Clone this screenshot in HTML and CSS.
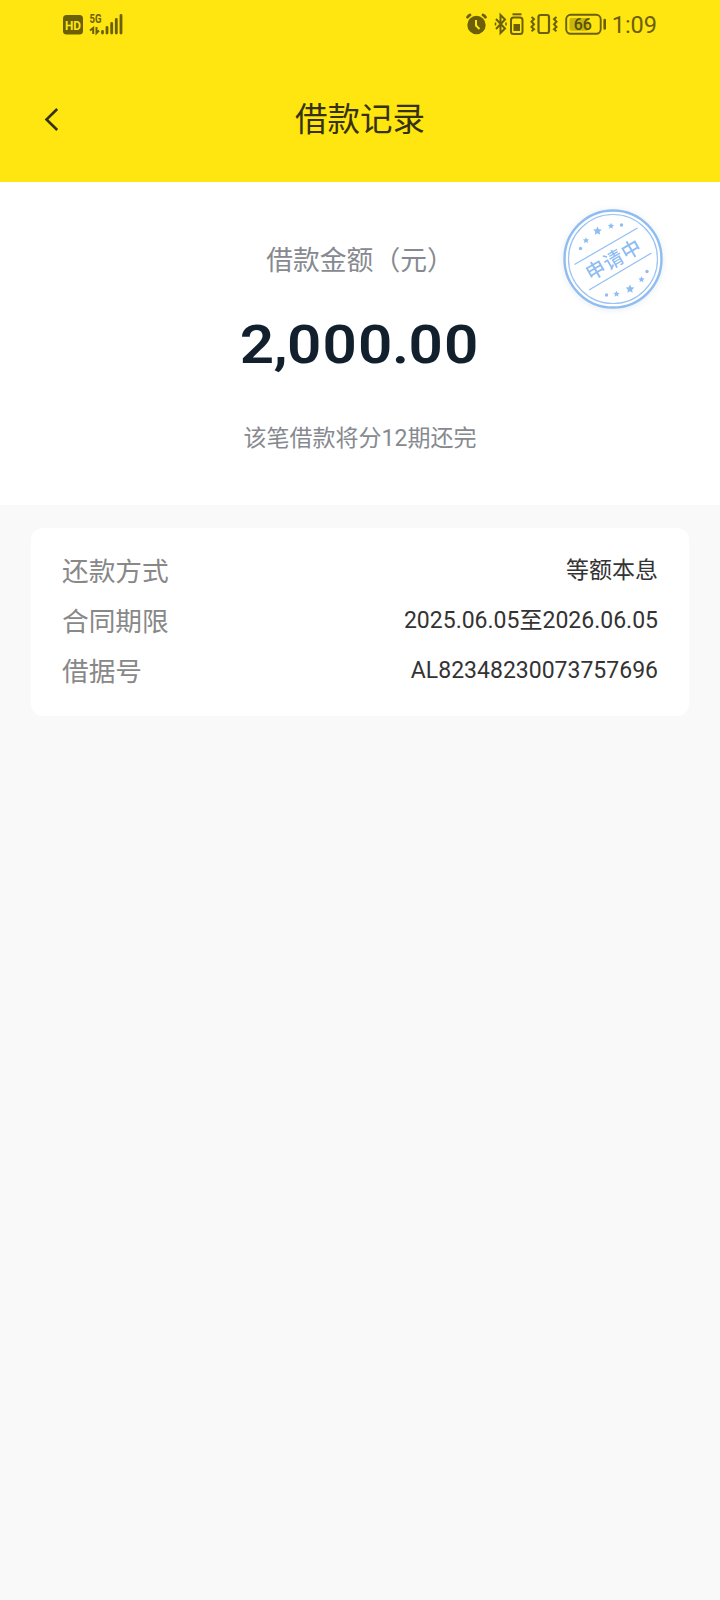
FILE: index.html
```html
<!DOCTYPE html>
<html lang="zh-CN">
<head>
    <meta charset="UTF-8">
    <meta name="viewport" content="width=device-width, initial-scale=1.0">
    <title>借款记录</title>
    <link rel="stylesheet" href="styles.css">
</head>
<body>
    <header class="header">
        <div class="status-bar">
            <svg class="status-left" width="62" height="26" viewBox="62 11 62 26">
                <rect x="63" y="15" width="20" height="19.5" rx="3.5" fill="#6b6008"/>
                <text class="hd" x="73" y="29.5" textLength="16" lengthAdjust="spacingAndGlyphs">HD</text>
                <text class="network" x="89.5" y="23" textLength="12" lengthAdjust="spacingAndGlyphs">5G</text>
                <path d="M90 30.5l3.2-2.5V34M96.5 27v6l2.5-2.5" fill="none" stroke="#6b6008" stroke-width="2"/>
                <path d="M102.5 31.5v1.5M107 27.5v5.5M111.7 23.5v9.5M116.3 19.5v13.5M121 15.5v17.5" stroke="#6b6008" stroke-width="2.8" stroke-linecap="round"/>
            </svg>
            <div class="status-right">
                <svg width="144" height="26" viewBox="465 11 144 26" fill="none" stroke="#6b6008">
                    <!-- alarm -->
                    <circle cx="476.5" cy="25" r="9.2" fill="#6b6008" stroke="none"/>
                    <path d="M467.5 17.2q1-1.5 2.5-2.2M485.5 17.2q-1-1.5-2.5-2.2" stroke-width="2.8" stroke-linecap="round"/>
                    <path d="M476 20v5.5l3.5 3.5" stroke="#ffe610" stroke-width="2"/>
                    <!-- bluetooth -->
                    <path d="M496 19l9 9.5-4.5 4.5V15l4.5 4.5-9 9.5" stroke-width="2"/>
                    <path d="M495.5 22.5v3M506 22.5v3" stroke-width="1.5"/>
                    <!-- device battery -->
                    <rect x="511" y="17.5" width="11.5" height="16.5" rx="2.5" stroke-width="2"/>
                    <path d="M512.5 14.3h9" stroke-width="2"/>
                    <rect x="513.5" y="24" width="6.5" height="7" fill="#6b6008" stroke="none"/>
                    <!-- vibrate -->
                    <rect x="538.5" y="15" width="10.5" height="18" rx="2" stroke-width="2.2"/>
                    <path d="M531.5 17l2.5 2-2.5 2.7 2.5 2.6-2.5 2.7 2.5 2.3-2.5 2M556.5 17l-2.5 2 2.5 2.7-2.5 2.6 2.5 2.7-2.5 2.3 2.5 2" stroke-width="2"/>
                    <!-- battery level -->
                    <rect x="566.2" y="14.8" width="34.5" height="19" rx="4.5" stroke-width="1.9"/>
                    <rect x="569.5" y="18" width="19" height="12.7" rx="2" fill="#c9b70d" stroke="none"/>
                    <path d="M604.7 20v8.5" stroke-width="2.6" stroke-linecap="round"/>
                    <text class="level" x="582.8" y="30">66</text>
                </svg>
                <span class="time">1:09</span>
            </div>
        </div>
        <div class="nav">
            <svg class="back" width="16" height="26" viewBox="0 0 16 26">
                <path d="M13.2 2L2.5 12.5l10.7 10.5" fill="none" stroke="#35320f" stroke-width="2.6"/>
            </svg>
            <h1>借款记录</h1>
        </div>
    </header>

    <section class="summary">
        <p class="summary-label">借款金额（元）</p>
        <p class="amount">2<span>,</span>000<span>.</span>00</p>
        <p class="summary-note">该笔借款将分12期还完</p>

        <svg class="stamp" width="116" height="116" viewBox="-58 -58 116 116">
            <defs>
                <path id="star" d="M0-4.5L1.3-1.7 4.3-1.4 2.1.7 2.7 3.7 0 2.2-2.7 3.7-2.1.7-4.3-1.4-1.3-1.7Z"/>
            </defs>
            <circle r="48.5" fill="#fff" stroke="#8fbdf2" stroke-width="2.4"/>
            <circle r="44.5" fill="none" stroke="#9bc4f3" stroke-width="1.2"/>
            <path d="M-38.5 5.5L24.5-31M-24 31L38.5-6" stroke="#94c0f3" stroke-width="1.3"/>
            <g fill="#8fbdf2">
                <circle cx="-32.5" cy="-10.5" r="1.7"/>
                <use href="#star" transform="translate(-27 -18.5) scale(.72)"/>
                <use href="#star" transform="translate(-15.5 -28)"/>
                <use href="#star" transform="translate(-2 -33) scale(.72)"/>
                <circle cx="8.5" cy="-34" r="1.7"/>
                <circle cx="-6.5" cy="36" r="1.7"/>
                <use href="#star" transform="translate(3.5 35) scale(.72)"/>
                <use href="#star" transform="translate(17 30)"/>
                <use href="#star" transform="translate(28.5 20.5) scale(.72)"/>
                <circle cx="34" cy="12.5" r="1.7"/>
            </g>
            <text class="stamp-text" transform="rotate(-30)" x="0.5" y="7.8">申请中</text>
        </svg>
    </section>

    <section class="card">
        <div class="row">
            <span class="row-label">还款方式</span>
            <span class="row-value">等额本息</span>
        </div>
        <div class="row">
            <span class="row-label">合同期限</span>
            <span class="row-value">2025.06.05至2026.06.05</span>
        </div>
        <div class="row">
            <span class="row-label">借据号</span>
            <span class="row-value">AL82348230073757696</span>
        </div>
    </section>
</body>
</html>
```
FILE: styles.css
```css
* {
    box-sizing: border-box;
}
body {
    margin: 0;
    min-height: 1600px;
    background-color: #f9f9f9;
    font-family: Roboto, "Noto Sans CJK SC", sans-serif;
    font-weight: 400;
}
h1, p {
    margin: 0;
}
.header {
    height: 182px;
    background-color: #ffe610;
}
.status-bar {
    display: flex;
    justify-content: space-between;
    align-items: center;
    height: 48px;
    padding: 0 63px 0 62px;
}
.status-right {
    display: flex;
    align-items: center;
    gap: 3px;
}
.time {
    padding-top: 2px;
    font-size: 23.5px;
    line-height: 26px;
    color: #6b6008;
}
.hd {
    font: 700 13px Roboto, sans-serif;
    fill: #ffe610;
    text-anchor: middle;
}
.network {
    font: 700 12px Roboto, sans-serif;
    fill: #6b6008;
}
.level {
    font: 500 16px Roboto, sans-serif;
    fill: #574e08;
    stroke: none;
    text-anchor: middle;
}
.nav {
    display: grid;
    grid-template-columns: 60px 1fr 60px;
    align-items: center;
    height: 144px;
}
.back {
    justify-self: end;
}
.nav h1 {
    font-size: 32.5px;
    font-weight: 400;
    line-height: 48px;
    text-align: center;
    color: #35320f;
}
.summary {
    position: relative;
    height: 323px;
    padding-top: 59px;
    background-color: #fff;
    text-align: center;
}
.summary-label {
    font-size: 26.8px;
    line-height: 40px;
    color: #868a90;
}
.amount {
    width: fit-content;
    margin: 32px auto 0;
    font-size: 53.5px;
    font-weight: 600;
    line-height: 64px;
    letter-spacing: 1px;
    color: #12202d;
    transform: scaleX(1.125);
}
.amount span {
    margin: 0 -1.5px;
}
.summary-note {
    margin-top: 44px;
    font-size: 23px;
    line-height: 36px;
    color: #868a90;
}
.stamp {
    position: absolute;
    top: 19px;
    right: 49.5px;
    filter: drop-shadow(0 1px 3px rgba(90, 120, 160, 0.15));
}
.stamp-text {
    font: 500 19.5px "Noto Sans CJK SC", sans-serif;
    letter-spacing: 1px;
    fill: #8fbdf2;
    text-anchor: middle;
}
.card {
    margin: 23px 31px 0;
    padding: 19px 31px;
    height: 188px;
    border-radius: 12px;
    background-color: #fff;
}
.row {
    display: flex;
    justify-content: space-between;
    height: 50px;
}
.row-label {
    font-size: 26.7px;
    line-height: 50px;
    color: #888;
}
.row-value {
    font-size: 23px;
    line-height: 48px;
    color: #333;
}
```
